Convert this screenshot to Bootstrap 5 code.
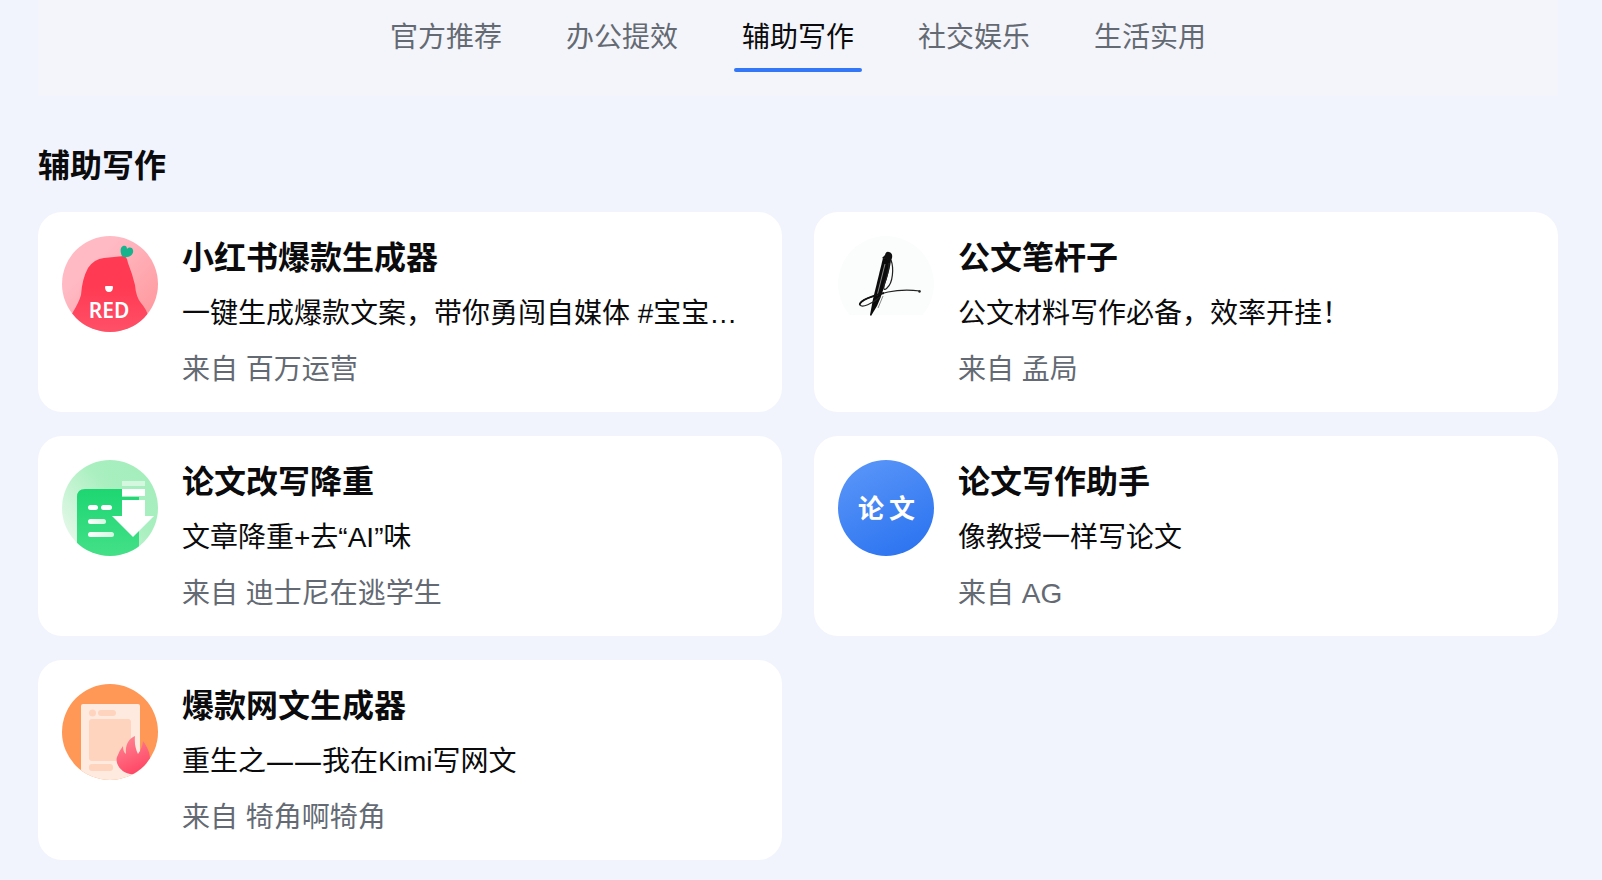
<!DOCTYPE html>
<html lang="zh-CN">
<head>
<meta charset="utf-8">
<meta name="viewport" content="width=device-width, initial-scale=1">
<title>辅助写作</title>
<link href="https://cdn.jsdelivr.net/npm/bootstrap@5.3.0/dist/css/bootstrap.min.css" rel="stylesheet">
<style>
  body { background: #f1f4fd; color: #0b0b0d; font-family: "Liberation Sans", "Noto Sans CJK SC", sans-serif; }
  .page { padding: 0 44px 20px 38px; }
  .tab-band { background: #f4f5fa; height: 96px; }
  .tab-band .nav { gap: 48px; }
  .tab-band .nav-link { padding: 18px 8px 14px; font-size: 28px; line-height: 40px; color: #646a73; border: 0; border-radius: 0; position: relative; }
  .tab-band .nav-link.active { color: #0b0b0d; }
  .tab-band .nav-link.active::after { content: ""; position: absolute; left: 0; right: 0; bottom: 0; height: 4px; border-radius: 2px; background: #3377f6; }
  .section-title { font-size: 32px; line-height: 40px; font-weight: 600; margin: 50px 0 26px; }
  .agents { --bs-gutter-x: 32px; row-gap: 24px; }
  .agent { border: 0; border-radius: 24px; padding: 24px 24px 22px; color: inherit; text-decoration: none; background: #fff; }
  .agent-icon { width: 96px; height: 96px; }
  .agent-body { padding-top: 2px; }
  .agent-name { font-size: 32px; line-height: 40px; font-weight: 600; margin: 0; }
  .agent-text { font-size: 28px; line-height: 40px; margin: 0; }
  .agent-from { color: #646a73; }
  .dash { font-family: "Noto Sans", sans-serif; line-height: 1; }
</style>
</head>
<body>
<div class="page">
  <header class="tab-band">
    <ul class="nav justify-content-center" role="tablist">
      <li class="nav-item"><button class="nav-link bg-transparent" type="button" role="tab">官方推荐</button></li>
      <li class="nav-item"><button class="nav-link bg-transparent" type="button" role="tab">办公提效</button></li>
      <li class="nav-item"><button class="nav-link bg-transparent active" type="button" role="tab" aria-selected="true">辅助写作</button></li>
      <li class="nav-item"><button class="nav-link bg-transparent" type="button" role="tab">社交娱乐</button></li>
      <li class="nav-item"><button class="nav-link bg-transparent" type="button" role="tab">生活实用</button></li>
    </ul>
  </header>

  <main>
    <h1 class="section-title">辅助写作</h1>
    <div class="row row-cols-1 row-cols-lg-2 agents">
      <div class="col">
        <a href="#" class="card agent flex-row gap-4 h-100">
          <svg class="agent-icon flex-shrink-0" viewBox="0 0 96 96" aria-hidden="true">
            <defs>
              <clipPath id="disc"><circle cx="48" cy="48" r="48"/></clipPath>
              <linearGradient id="pink" x1="0" y1="0" x2="1" y2="1"><stop offset=".3" stop-color="#ffbac4"/><stop offset="1" stop-color="#ff9296"/></linearGradient>
              <linearGradient id="rose" x1="0" y1="0" x2="0" y2="1"><stop offset=".4" stop-color="#ff3a52"/><stop offset="1" stop-color="#ff5068"/></linearGradient>
            </defs>
            <g clip-path="url(#disc)">
              <rect width="96" height="96" fill="url(#pink)"/>
              <path d="M8 81 L11 76 Q17 66 19 59 Q20 43 26 32 Q32 23 42 22 Q52 21 62 20 Q65 21 66 27 Q70 37 73 49 Q74 61 79 67 Q85 74 86 80 V96 H8Z" fill="url(#rose)"/>
              <path d="M60 20 C58 16 58 11 61 10 C64 9 65 11 65 13 C67 11 70 11 71 14 C72 18 68 21 65 21 Q62 22 60 20Z" fill="#17b38c"/>
              <path d="M43 51 Q43 50 44 50 H50 Q51 50 51 51 Q51 56 47 56 Q43 56 43 51Z" fill="#fff"/>
              <text x="47" y="82" text-anchor="middle" font-family="Noto Sans, sans-serif" font-weight="600" font-size="21" fill="#fff">RED</text>
            </g>
          </svg>
          <div class="agent-body d-flex flex-column gap-3 overflow-hidden flex-grow-1">
            <h2 class="agent-name text-truncate">小红书爆款生成器</h2>
            <p class="agent-text text-truncate">一键生成爆款文案，带你勇闯自媒体 #宝宝…</p>
            <p class="agent-text agent-from">来自 百万运营</p>
          </div>
        </a>
      </div>

      <div class="col">
        <a href="#" class="card agent flex-row gap-4 h-100">
          <svg class="agent-icon flex-shrink-0" viewBox="0 0 96 96" aria-hidden="true">
            <g clip-path="url(#disc)"><rect width="96" height="79" fill="#fbfdfc"/></g>
            <path d="M45 22 L53 24 C52 35 46 52 42 63 L39 70 L33 80 L32 79 L35 63 Z" fill="#0b0b0b"/>
            <path d="M47 19 Q48 15 51 16 Q55 17 54 22 L53 25 L44 22Z" fill="#111"/>
            <path d="M53 24 C56 32 55 47 49 52 Q45 56 46 49 Q51 36 51 27" fill="none" stroke="#222" stroke-width="1.2"/>
            <path d="M45 60 L40 72 M47 28 L39 60" stroke="#888" stroke-width="1"/>
            <path d="M42 61 C34 68 24 72 22 69 C20 65 36 59 50 56 Q65 53 82 55" fill="none" stroke="#222" stroke-width="1.2" stroke-linecap="round"/>
            <path d="M22 69 C20 65 36 59 46 57" fill="none" stroke="#111" stroke-width="1.8"/>
            <circle cx="81.500" cy="55.500" r="1.200" fill="#222"/>
          </svg>
          <div class="agent-body d-flex flex-column gap-3 overflow-hidden flex-grow-1">
            <h2 class="agent-name text-truncate">公文笔杆子</h2>
            <p class="agent-text text-truncate">公文材料写作必备，效率开挂！</p>
            <p class="agent-text agent-from">来自 孟局</p>
          </div>
        </a>
      </div>

      <div class="col">
        <a href="#" class="card agent flex-row gap-4 h-100">
          <svg class="agent-icon flex-shrink-0" viewBox="0 0 96 96" aria-hidden="true">
            <defs>
              <linearGradient id="mint" x1="0" y1=".7" x2=".8" y2="0"><stop offset="0" stop-color="#e2f8e7"/><stop offset=".6" stop-color="#a9efbf"/><stop offset="1" stop-color="#a4eebc"/></linearGradient>
              <linearGradient id="leaf" x1="0" y1="0" x2="0" y2="1"><stop offset="0" stop-color="#1dd672"/><stop offset="1" stop-color="#44e088"/></linearGradient>
              <linearGradient id="ink" x1="0" y1="0" x2="1" y2="0"><stop offset="0" stop-color="#fff"/><stop offset="1" stop-color="#d5f8e1"/></linearGradient>
            </defs>
            <g clip-path="url(#disc)">
              <rect width="96" height="96" fill="url(#mint)"/>
              <path d="M15 96 V37 Q15 29 23 29 H60 V37 H77 V96Z" fill="url(#leaf)"/>
              <rect x="26" y="45" width="10" height="5" rx="2.500" fill="#fff"/>
              <rect x="39" y="45" width="11" height="5" rx="2.500" fill="#fff"/>
              <rect x="26" y="59" width="18" height="5" rx="2.500" fill="url(#ink)"/>
              <rect x="26" y="72" width="26" height="5" rx="2.500" fill="url(#ink)"/>
              <rect x="60" y="21" width="23" height="5" fill="#d5f7df"/>
              <rect x="60" y="29" width="23" height="7" fill="#fff"/>
              <path d="M60 40 H83 V56 H92 L71 77 L50 56 H60Z" fill="#fff"/>
            </g>
          </svg>
          <div class="agent-body d-flex flex-column gap-3 overflow-hidden flex-grow-1">
            <h2 class="agent-name text-truncate">论文改写降重</h2>
            <p class="agent-text text-truncate">文章降重+去“AI”味</p>
            <p class="agent-text agent-from">来自 迪士尼在逃学生</p>
          </div>
        </a>
      </div>

      <div class="col">
        <a href="#" class="card agent flex-row gap-4 h-100">
          <svg class="agent-icon flex-shrink-0" viewBox="0 0 96 96" aria-hidden="true">
            <defs><linearGradient id="blue" x1=".2" y1="0" x2=".7" y2="1"><stop offset=".1" stop-color="#5592f8"/><stop offset="1" stop-color="#2c74f0"/></linearGradient></defs>
            <circle cx="48" cy="48" r="48" fill="url(#blue)"/>
            <text x="20 51" y="58" font-family="Noto Sans CJK SC, sans-serif" font-weight="700" font-size="26" fill="#fff">论文</text>
          </svg>
          <div class="agent-body d-flex flex-column gap-3 overflow-hidden flex-grow-1">
            <h2 class="agent-name text-truncate">论文写作助手</h2>
            <p class="agent-text text-truncate">像教授一样写论文</p>
            <p class="agent-text agent-from">来自 AG</p>
          </div>
        </a>
      </div>

      <div class="col">
        <a href="#" class="card agent flex-row gap-4 h-100">
          <svg class="agent-icon flex-shrink-0" viewBox="0 0 96 96" aria-hidden="true">
            <defs><linearGradient id="fire" x1=".3" y1="0" x2=".7" y2="1"><stop offset="0" stop-color="#ff8492"/><stop offset="1" stop-color="#ff4263"/></linearGradient></defs>
            <g clip-path="url(#disc)">
              <rect width="96" height="96" fill="#ff9756"/>
              <path d="M19 96 V22 Q19 20 21 20 H76 Q78 20 78 22 V96Z" fill="#ffeadf"/>
              <g fill="#ffd4bf">
                <circle cx="30.500" cy="29" r="3.500"/>
                <rect x="36" y="26" width="18" height="6" rx="3"/>
                <rect x="27" y="35" width="42" height="42" rx="3"/>
                <rect x="27" y="80" width="24" height="7" rx="3"/>
              </g>
              <path d="M68 90 C58 88 53 79 55 73 Q57 67 61 62 Q61 68 64 70 C63 60 67 55 73 52 Q72 62 76 70 Q80 65 81 57 C86 64 88 69 88 75 Q84 84 76 88 Q73 91 68 90Z" fill="url(#fire)"/>
            </g>
          </svg>
          <div class="agent-body d-flex flex-column gap-3 overflow-hidden flex-grow-1">
            <h2 class="agent-name text-truncate">爆款网文生成器</h2>
            <p class="agent-text text-truncate">重生之<span class="dash">——</span>我在Kimi写网文</p>
            <p class="agent-text agent-from">来自 犄角啊犄角</p>
          </div>
        </a>
      </div>
    </div>
  </main>
</div>
<script src="https://cdn.jsdelivr.net/npm/bootstrap@5.3.0/dist/js/bootstrap.bundle.min.js"></script>
</body>
</html>
